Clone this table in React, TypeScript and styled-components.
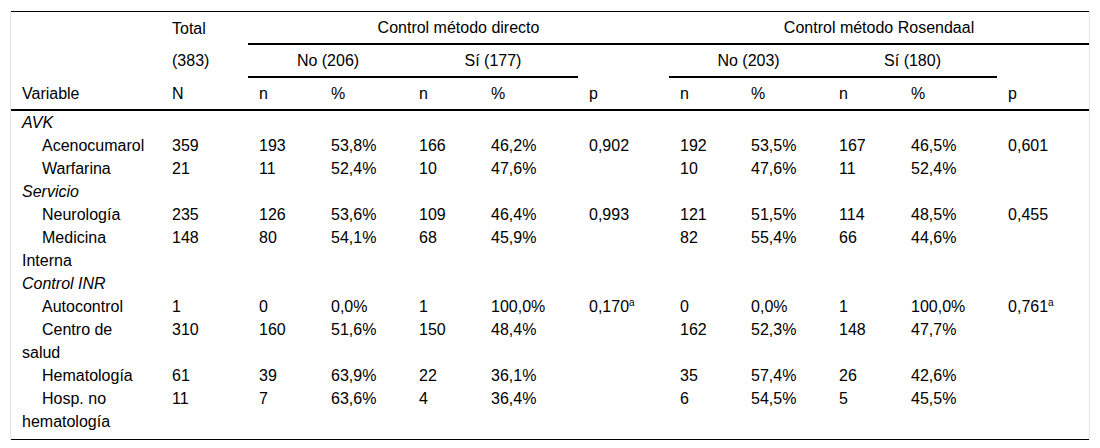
import React from "react";
import styled, { createGlobalStyle } from "styled-components";

const Global = createGlobalStyle`
  html, body { margin: 0; padding: 0; background: #fff; }
  body { font-family: "Liberation Sans", Arial, sans-serif; color: #000; }
`;

const Frame = styled.div`
  margin: 11px 0 0 10px;
  width: 1078px;
  border-left: 1px solid #e4e4e4;
  border-right: 1px solid #e4e4e4;
`;

const Table = styled.table`
  width: 1078px;
  border-collapse: collapse;
  table-layout: fixed;
  font-size: 16px;
  border-top: 1px solid #000;
  border-bottom: 1px solid #000;
`;

const HeadCell = styled.th<{ $center?: boolean; $rule?: boolean }>`
  font-weight: normal;
  text-align: ${(p) => (p.$center ? "center" : "left")};
  vertical-align: middle;
  padding: 4px 11px;
  line-height: 23px;
  white-space: nowrap;
  border-bottom: ${(p) => (p.$rule ? "2px solid #000" : "none")};
`;

const HeadRow = styled.tr<{ $last?: boolean }>`
  ${(p) => (p.$last ? "th { border-bottom: 2px solid #000; }" : "")}
`;

const Cell = styled.td<{ $indent?: boolean }>`
  padding: 0 11px;
  line-height: 23px;
  vertical-align: top;
  text-indent: ${(p) => (p.$indent ? "20px" : "0")};
`;

const SectionCell = styled.td`
  padding: 0 11px;
  line-height: 23px;
  font-style: italic;
`;

const BodyRow = styled.tr<{ $last?: boolean }>`
  td { padding-bottom: ${(p) => (p.$last ? "6px" : "0")}; }
`;

const Sup = styled.sup`
  font-size: 10px;
  line-height: 0;
  vertical-align: 6px;
`;

const widths = [150, 87, 72, 88, 72, 98, 91, 71, 88, 72, 97, 92];

type Row = { label: string; cells: string[] } | { section: string };

const rows: Row[] = [
  { section: "AVK" },
  { label: "Acenocumarol", cells: ["359", "193", "53,8%", "166", "46,2%", "0,902", "192", "53,5%", "167", "46,5%", "0,601"] },
  { label: "Warfarina", cells: ["21", "11", "52,4%", "10", "47,6%", "", "10", "47,6%", "11", "52,4%", ""] },
  { section: "Servicio" },
  { label: "Neurología", cells: ["235", "126", "53,6%", "109", "46,4%", "0,993", "121", "51,5%", "114", "48,5%", "0,455"] },
  { label: "Medicina Interna", cells: ["148", "80", "54,1%", "68", "45,9%", "", "82", "55,4%", "66", "44,6%", ""] },
  { section: "Control INR" },
  { label: "Autocontrol", cells: ["1", "0", "0,0%", "1", "100,0%", "0,170^a", "0", "0,0%", "1", "100,0%", "0,761^a"] },
  { label: "Centro de salud", cells: ["310", "160", "51,6%", "150", "48,4%", "", "162", "52,3%", "148", "47,7%", ""] },
  { label: "Hematología", cells: ["61", "39", "63,9%", "22", "36,1%", "", "35", "57,4%", "26", "42,6%", ""] },
  { label: "Hosp. no hematología", cells: ["11", "7", "63,6%", "4", "36,4%", "", "6", "54,5%", "5", "45,5%", ""] },
];

function renderValue(v: string) {
  if (v.includes("^")) {
    const [base, sup] = v.split("^");
    return (
      <>
        {base}
        <Sup>{sup}</Sup>
      </>
    );
  }
  return v;
}

export default function App() {
  return (
    <>
      <Global />
      <Frame>
        <Table>
          <colgroup>
            {widths.map((w, i) => (
              <col key={i} style={{ width: w }} />
            ))}
          </colgroup>
          <thead>
            <HeadRow>
              <HeadCell />
              <HeadCell>Total</HeadCell>
              <HeadCell colSpan={5} $center $rule>
                Control método directo
              </HeadCell>
              <HeadCell colSpan={5} $center $rule>
                Control método Rosendaal
              </HeadCell>
            </HeadRow>
            <HeadRow>
              <HeadCell />
              <HeadCell>(383)</HeadCell>
              <HeadCell colSpan={2} $center $rule>
                No (206)
              </HeadCell>
              <HeadCell colSpan={2} $center $rule>
                Sí (177)
              </HeadCell>
              <HeadCell />
              <HeadCell colSpan={2} $center $rule>
                No (203)
              </HeadCell>
              <HeadCell colSpan={2} $center $rule>
                Sí (180)
              </HeadCell>
              <HeadCell />
            </HeadRow>
            <HeadRow $last>
              {["Variable", "N", "n", "%", "n", "%", "p", "n", "%", "n", "%", "p"].map((h, i) => (
                <HeadCell key={i}>{h}</HeadCell>
              ))}
            </HeadRow>
          </thead>
          <tbody>
            {rows.map((r, i) => {
              const last = i === rows.length - 1;
              if ("section" in r) {
                return (
                  <BodyRow key={i} $last={last}>
                    <SectionCell colSpan={12}>{r.section}</SectionCell>
                  </BodyRow>
                );
              }
              return (
                <BodyRow key={i} $last={last}>
                  <Cell $indent>{r.label}</Cell>
                  {r.cells.map((c, j) => (
                    <Cell key={j}>{renderValue(c)}</Cell>
                  ))}
                </BodyRow>
              );
            })}
          </tbody>
        </Table>
      </Frame>
    </>
  );
}
